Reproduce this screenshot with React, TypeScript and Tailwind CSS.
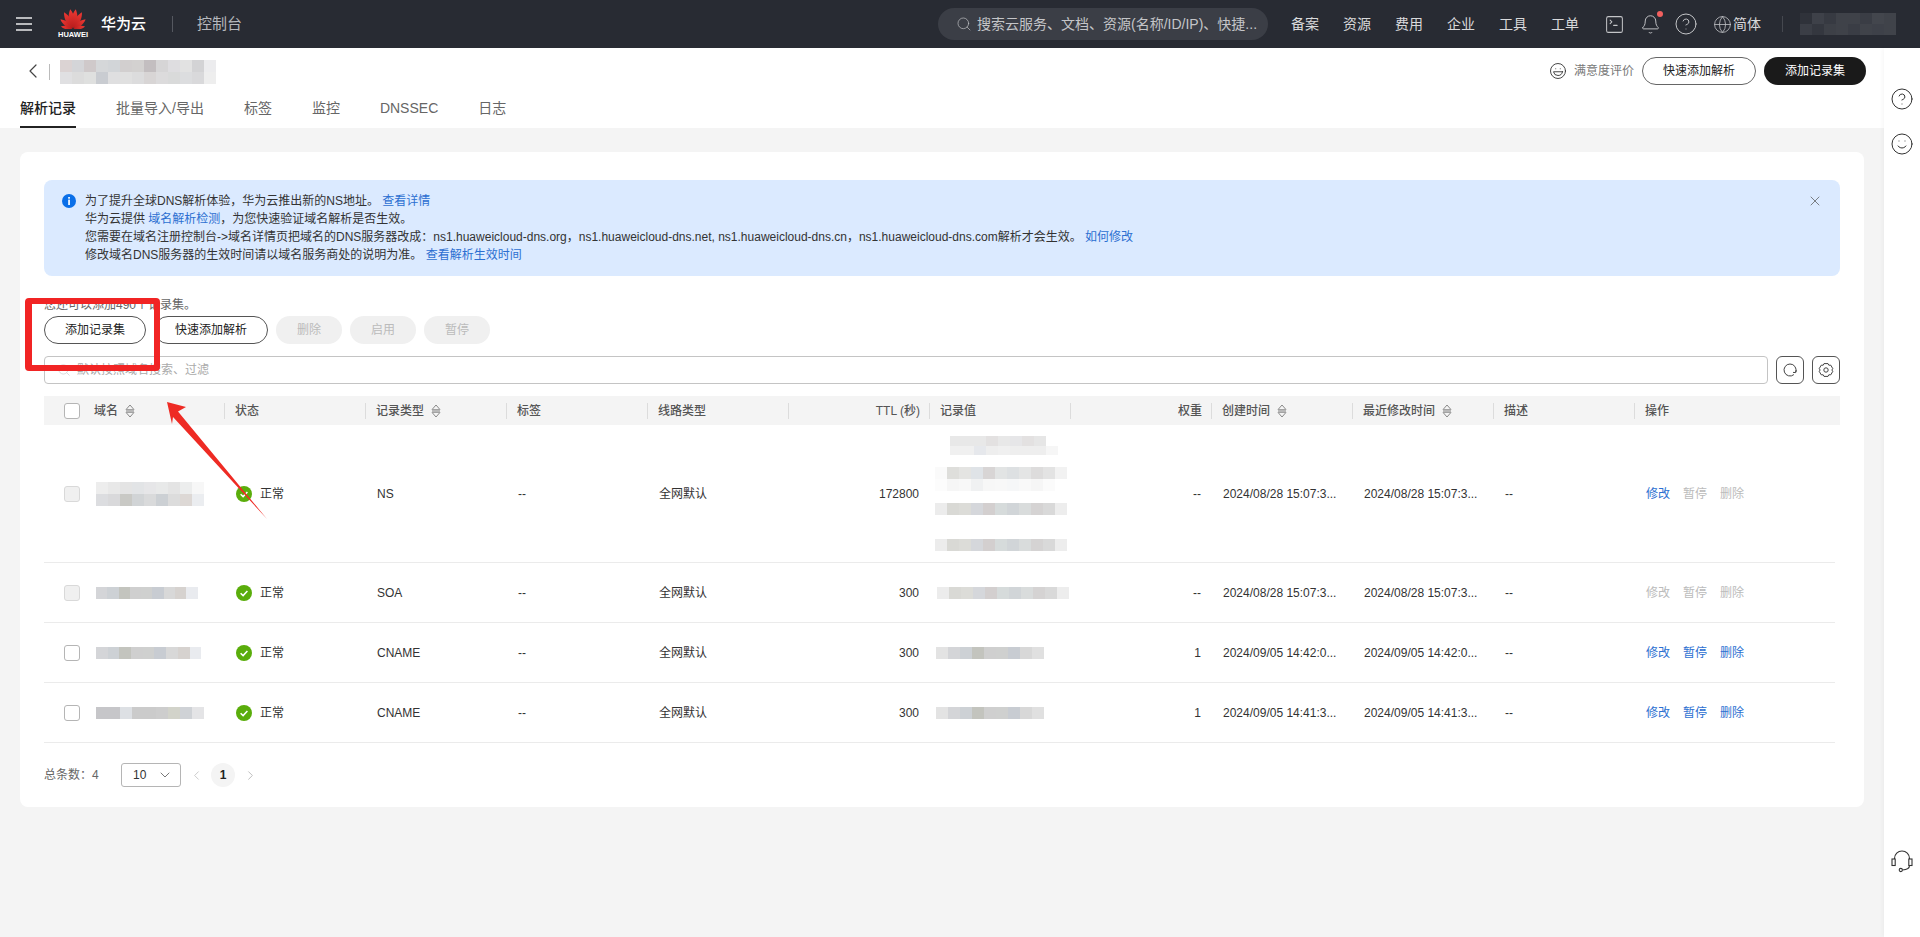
import React from "react";
import { Search, SquareTerminal, Bell, CircleHelp, Globe, Laugh, Smile, ChevronLeft, ChevronRight, ChevronDown, X } from "lucide-react";

function Mosaic({ rows, w = 12, h = 12, className = "" }: { rows: string[][]; w?: number; h?: number; className?: string }) {
  return (
    <div className={"flex flex-col " + className}>
      {rows.map((r, i) => (
        <div key={i} className="flex">
          {r.map((c, j) => (
            <div key={j} style={{ width: w, height: h, backgroundColor: c }} />
          ))}
        </div>
      ))}
    </div>
  );
}

const titleRows = [
  ["#dbd3d3", "#d4d5d8", "#cfc9ca", "#d5d7d9", "#d2d5d8", "#d2cfcf", "#d3d1d0", "#c3bec0", "#d6d5d6", "#dedde0", "#e2e2e2", "#d3d3d5", "#ececee"],
  ["#e0e0e2", "#dcdcdc", "#dfe0df", "#c9ccd1", "#dfdfe0", "#e0e0e0", "#dcdcdd", "#d8d5d5", "#dcdbdc", "#d9dada", "#dcdddf", "#d9d9db", "#eeeeee"],
];
const userRows = [
  ["#2f323a", "#3e4149", "#373a42", "#3f4249", "#3f4249", "#3a3d45", "#43464d", "#40434a"],
  ["#3b3e46", "#34373f", "#3d4047", "#3f4249", "#3a3d45", "#40434a", "#3e4149", "#40434a"],
];
const d1 = [
  ["#ededed", "#e8e8e8", "#e4e4e4", "#e2e4e6", "#e6e6e8", "#e8e9e9", "#e4e4e4", "#eceded", "#f7f7f7"],
  ["#dcdde0", "#d9d9db", "#c9c9c5", "#d1d4d6", "#d9dadb", "#ccd0d4", "#dcdcdc", "#ddd8d5", "#ebedf0"],
];
const d2 = [["#d4d5d8", "#cdd1d5", "#c3c4be", "#cfcfcf", "#cfd0cf", "#c8ccd2", "#d8d8d8", "#d6d2cf", "#e9ebef"]];
const d4 = [["#c6c6c9", "#c6c6c9", "#dde0e4", "#cbcbcb", "#cbcbcb", "#cdcdcd", "#d2d3ca", "#cfd2d6", "#e4e4e6"]];
const v2 = [["#ececec", "#d9d9d5", "#dcdcd8", "#d5d7db", "#d3cfcf", "#d6dbdb", "#d1d5d8", "#d9dcdc", "#d5d3d3", "#d9d9d9", "#ededed"]];
const v3 = [["#e3e3e3", "#d4d5d8", "#cdd1d5", "#c3c4be", "#cfcfcf", "#cfd0cf", "#c8ccd2", "#d8d8d8", "#e0e0e0"]];

function Sort() {
  return (
    <svg width="10" height="14" viewBox="0 0 10 14" fill="none" className="ml-[7px] shrink-0">
      <path d="M5 1 L9 5.6 H1 Z" stroke="#8a8a8a" strokeWidth="1" strokeLinejoin="round" />
      <path d="M5 13 L9 8.4 H1 Z" stroke="#8a8a8a" strokeWidth="1" strokeLinejoin="round" />
      <rect x="1" y="5.6" width="8" height="2.8" fill="#b8b8b8" />
    </svg>
  );
}

function Box({ disabled }: { disabled?: boolean }) {
  return <div className={"h-4 w-4 shrink-0 rounded-[3px] border " + (disabled ? "border-[#d9d9d9] bg-[#f0f0f0]" : "border-[#b5b5b5] bg-white")} />;
}

function Check() {
  return (
    <svg width="16" height="16" viewBox="0 0 16 16" className="shrink-0">
      <circle cx="8" cy="8" r="8" fill="#5aad0b" />
      <path d="M4.6 8.2 L7.1 10.6 L11.4 5.9" fill="none" stroke="#fff" strokeWidth="1.5" />
    </svg>
  );
}

const heads: [string, boolean, boolean][] = [
  ["状态", false, false],
  ["记录类型", true, false],
  ["标签", false, false],
  ["线路类型", false, false],
  ["TTL (秒)", false, true],
  ["记录值", false, false],
  ["权重", false, true],
  ["创建时间", true, false],
  ["最近修改时间", true, false],
  ["描述", false, false],
  ["操作", false, false],
];

const GRID = "grid grid-cols-[180px_141px_141px_141px_141px_141px_141px_141px_141px_141px_141px_206px]";
const RGRID = "grid grid-cols-[180px_141px_141px_141px_141px_141px_141px_141px_141px_141px_141px_201px]";

type Row = {
  h: string; boxOff: boolean; dom: React.ReactNode; type: string; ttl: string; val: React.ReactNode; wt: string;
  c: string; m: string; a: [boolean, boolean, boolean];
};

const rowsData: Row[] = [
  {
    h: "h-[138px]", boxOff: true, dom: <Mosaic rows={d1} className="ml-4" />, type: "NS", ttl: "172800", wt: "--",
    c: "2024/08/28 15:07:3...", m: "2024/08/28 15:07:3...", a: [true, false, false],
    val: (
      <div className="-ml-[3px] flex flex-col">
        <Mosaic w={12} h={9.5} rows={[
          ["#ffffff", "#e8e8e8", "#e8e8e8", "#e8e8e8", "#e3e1e1", "#e8e8e8", "#e6e6e8", "#e3e1e1", "#e6e6e6", "#ffffff"],
          ["#ffffff", "#f0f0f0", "#f0f0f0", "#e6e8ec", "#eeeeee", "#f0f0f0", "#eeeeee", "#eeeeee", "#eeeeee", "#f6f6f6"],
        ]} className="ml-[3px]" />
        <Mosaic w={12} h={12} rows={[
          ["#fafafa", "#dededb", "#e4e4e2", "#dfe3e7", "#d8d5d5", "#e2e4e4", "#dde0e2", "#e4e5e5", "#dddcdc", "#e3e3e3", "#f2f2f2"],
          ["#fcfcfc", "#f6f6f6", "#f8f8f8", "#f0f1f2", "#f7f7f7", "#f8f8f8", "#f6f7f8", "#f9f9f9", "#f6f6f6", "#fbfbfb", "#ffffff"],
        ]} className="mt-3" />
        <Mosaic rows={v2} className="mt-3" />
        <Mosaic rows={v2} className="mt-6" />
      </div>
    ),
  },
  {
    h: "h-[60px]", boxOff: true, dom: <Mosaic w={11.3} rows={d2} className="ml-4" />, type: "SOA", ttl: "300", wt: "--",
    c: "2024/08/28 15:07:3...", m: "2024/08/28 15:07:3...", a: [false, false, false],
    val: <Mosaic rows={v2} className="-ml-[1px]" />,
  },
  {
    h: "h-[60px]", boxOff: false, dom: <Mosaic w={11.7} rows={d2} className="ml-4" />, type: "CNAME", ttl: "300", wt: "1",
    c: "2024/09/05 14:42:0...", m: "2024/09/05 14:42:0...", a: [true, true, true],
    val: <Mosaic rows={v3} className="-ml-[2px]" />,
  },
  {
    h: "h-[60px]", boxOff: false, dom: <Mosaic rows={d4} className="ml-4" />, type: "CNAME", ttl: "300", wt: "1",
    c: "2024/09/05 14:41:3...", m: "2024/09/05 14:41:3...", a: [true, true, true],
    val: <Mosaic rows={v3} className="-ml-[2px]" />,
  },
];

function Logo() {
  const angles = [-78, -52, -28, -8, 8, 28, 52, 78];
  const lens = [0.62, 0.8, 0.95, 1, 1, 0.95, 0.8, 0.62];
  return (
    <div className="flex w-[26px] flex-col items-center">
      <svg width="26" height="20" viewBox="0 0 26 20">
        <defs>
          <linearGradient id="pet" x1="0" y1="1" x2="0" y2="0">
            <stop offset="0" stopColor="#b81c1c" />
            <stop offset="1" stopColor="#ee3a34" />
          </linearGradient>
        </defs>
        {angles.map((a, i) => (
          <g key={i} transform={`translate(13 20) rotate(${a}) scale(${lens[i]})`}>
            <path d="M0 -1 C -3.8 -7 -3.6 -14 0 -20 C 3.6 -14 3.8 -7 0 -1 Z" fill="url(#pet)" />
          </g>
        ))}
      </svg>
      <span className="mt-[1px] text-[7.5px] font-bold leading-[9px] text-white">HUAWEI</span>
    </div>
  );
}

function RefreshIcon() {
  return (
    <svg width="16" height="16" viewBox="0 0 16 16" fill="none" stroke="#444" strokeWidth="1">
      <path d="M11.9 12.6 A6 6 0 1 1 13.7 10" />
      <polyline points="11,10.4 13.7,10.6 14.4,8.2" />
    </svg>
  );
}

function GearIcon() {
  return (
    <svg width="16" height="16" viewBox="0 0 16 16" fill="none" stroke="#444" strokeWidth="1" strokeLinejoin="round">
      <path d="M6 1.6 H10 L10.8 3.2 L12.8 3.2 L14.8 6.7 L13.8 8 L14.8 9.3 L12.8 12.8 L10.8 12.8 L10 14.4 H6 L5.2 12.8 L3.2 12.8 L1.2 9.3 L2.2 8 L1.2 6.7 L3.2 3.2 L5.2 3.2 Z" />
      <circle cx="8" cy="8" r="2.2" />
    </svg>
  );
}

function HeadsetIcon() {
  return (
    <svg width="24" height="24" viewBox="0 0 24 24" fill="none" stroke="#333" strokeWidth="1.1">
      <path d="M4.5 10 V9.5 A7.5 7.5 0 0 1 19.5 9.5 V10" />
      <rect x="2" y="10" width="3.2" height="6.5" />
      <rect x="18.8" y="10" width="3.2" height="6.5" />
      <path d="M19.5 16.5 C19.5 19.5 16.5 20.8 12.5 21" />
      <circle cx="10.8" cy="21" r="1.6" />
    </svg>
  );
}

export default function App() {
  return (
    <div className="relative flex h-[937px] w-[1920px] flex-col overflow-hidden bg-[#f4f4f4] font-['Liberation_Sans','Noto_Sans_CJK_SC',sans-serif] text-xs text-[#333]">
      {/* top bar */}
      <header className="flex h-12 shrink-0 items-center bg-[#282b33] pl-4 text-[#d8d9db]">
        <div className="flex h-[14px] w-4 flex-col justify-between">
          <div className="h-[2px] bg-[#b9babd]" />
          <div className="h-[2px] bg-[#b9babd]" />
          <div className="h-[2px] bg-[#b9babd]" />
        </div>
        <div className="ml-7"><Logo /></div>
        <span className="ml-[15px] text-[15px] font-medium text-white">华为云</span>
        <div className="ml-[26px] h-4 w-px bg-[#555860]" />
        <span className="ml-6 text-[15px] text-[#b6b8bd]">控制台</span>
        <div className="ml-[696px] flex h-8 w-[330px] items-center rounded-2xl bg-[#3b3e46] pl-[18px] text-[#c4c5c8]">
          <Search size={16} strokeWidth={1} className="shrink-0" />
          <span className="ml-[5px] truncate text-sm">搜索云服务、文档、资源(名称/ID/IP)、快捷...</span>
        </div>
        <nav className="ml-[23px] flex gap-6 text-sm">
          <span>备案</span><span>资源</span><span>费用</span><span>企业</span><span>工具</span><span>工单</span>
        </nav>
        <SquareTerminal size={21} strokeWidth={1.15} className="ml-[25px] text-[#c4c5c8]" />
        <div className="relative ml-[15px]">
          <Bell size={21} strokeWidth={1.1} className="text-[#c4c5c8]" />
          <div className="absolute -right-[2px] -top-[3px] h-[6px] w-[6px] rounded-full bg-[#f2605f]" />
        </div>
        <CircleHelp size={24} strokeWidth={1} className="ml-[13px] text-[#c4c5c8]" />
        <Globe size={19} strokeWidth={1} className="ml-[15px] text-[#c4c5c8]" />
        <span className="ml-[1px] text-sm">简体</span>
        <div className="ml-[21px] h-4 w-px bg-[#45484f]" />
        <Mosaic rows={userRows} w={12} h={11} className="ml-[17px]" />
      </header>

      <div className="flex min-h-0 flex-1">
        <div className="flex w-[1884px] flex-col">
          {/* page head */}
          <section className="h-20 shrink-0 bg-white">
            <div className="flex h-[52px] items-start">
              <ChevronLeft size={24} strokeWidth={1.2} className="ml-[21px] mt-[11px] text-[#444]" />
              <div className="ml-[4px] mt-[16px] h-4 w-px bg-[#bbb]" />
              <Mosaic rows={titleRows} className="ml-[10px] mt-3" />
              <div className="ml-auto mr-[18px] mt-[9px] flex items-center">
                <Laugh size={18} strokeWidth={1.2} className="text-[#333]" />
                <span className="ml-[7px] text-xs text-[#777]">满意度评价</span>
                <button className="ml-2 h-7 w-[114px] rounded-full border border-[#666] bg-white text-xs text-[#222]">快速添加解析</button>
                <button className="ml-2 h-7 w-[102px] rounded-full bg-[#1a1a1a] text-xs text-white">添加记录集</button>
              </div>
            </div>
            <div className="ml-5 flex h-7 gap-10 text-sm text-[#666]">
              <div className="h-7 border-b-2 border-[#222] font-medium leading-4 text-[#222]">解析记录</div>
              <div className="leading-4">批量导入/导出</div>
              <div className="leading-4">标签</div>
              <div className="leading-4">监控</div>
              <div className="leading-4">DNSSEC</div>
              <div className="leading-4">日志</div>
            </div>
          </section>

          {/* card */}
          <section className="mx-5 mt-6 h-[655px] rounded-lg bg-white px-6 pt-7">
            <div className="relative flex h-24 rounded-lg bg-[#dbeaff] pl-[18px] pt-3">
              <svg width="14" height="14" viewBox="0 0 14 14" className="mt-[2px] shrink-0">
                <circle cx="7" cy="7" r="7" fill="#0a6fe8" />
                <rect x="6.2" y="5.6" width="1.7" height="5.4" fill="#fff" />
                <rect x="6.2" y="3" width="1.7" height="1.7" fill="#fff" />
              </svg>
              <div className="ml-[9px] text-xs leading-[18px] text-[#333]">
                <div>为了提升全球DNS解析体验，华为云推出新的NS地址。 <a className="text-[#2c6fd1]">查看详情</a></div>
                <div>华为云提供 <a className="text-[#2c6fd1]">域名解析检测</a>，为您快速验证域名解析是否生效。</div>
                <div>您需要在域名注册控制台-&gt;域名详情页把域名的DNS服务器改成：ns1.huaweicloud-dns.org，ns1.huaweicloud-dns.net, ns1.huaweicloud-dns.cn，ns1.huaweicloud-dns.com解析才会生效。 <a className="text-[#2c6fd1]">如何修改</a></div>
                <div>修改域名DNS服务器的生效时间请以域名服务商处的说明为准。 <a className="text-[#2c6fd1]">查看解析生效时间</a></div>
              </div>
              <X size={16} strokeWidth={1.1} className="absolute right-[17px] top-[13px] text-[#555]" />
            </div>

            <div className="mt-[21px] h-4 text-xs leading-4 text-[#666]">您还可以添加490个记录集。</div>

            <div className="mt-[3px] flex h-7 text-xs">
              <button className="w-[102px] rounded-full border border-[#555] bg-white text-[#222]">添加记录集</button>
              <button className="ml-2 w-[114px] rounded-full border border-[#555] bg-white text-[#222]">快速添加解析</button>
              <button className="ml-2 w-[66px] rounded-full bg-[#f0f0f0] text-[#bbb]">删除</button>
              <button className="ml-2 w-[66px] rounded-full bg-[#f0f0f0] text-[#bbb]">启用</button>
              <button className="ml-2 w-[66px] rounded-full bg-[#f0f0f0] text-[#bbb]">暂停</button>
            </div>

            <div className="mt-3 flex h-7 gap-2">
              <div className="flex w-[1724px] items-center rounded border border-[#c4c4c4] pl-3 text-[#aaa]">
                <Search size={14} strokeWidth={1.2} className="text-[#ccc]" />
                <span className="ml-[6px] text-xs">默认按照域名搜索、过滤</span>
              </div>
              <div className="flex w-7 items-center justify-center rounded-md border border-[#555]">
                <RefreshIcon />
              </div>
              <div className="flex w-7 items-center justify-center rounded-md border border-[#555]">
                <GearIcon />
              </div>
            </div>

            <div className={GRID + " mt-3 h-[29px] items-center bg-[#f4f4f4] text-xs font-medium text-[#555]"}>
              <div className="flex items-center pl-5">
                <Box />
                <span className="ml-[14px]">域名</span>
                <Sort />
              </div>
              {heads.map(([t, s, r]) => (
                <div key={t} className={"flex h-4 items-center border-l border-[#dcdcdc] pl-[10px] " + (r ? "justify-end pr-[9px]" : "")}>
                  <span>{t}</span>
                  {s && <Sort />}
                </div>
              ))}
            </div>

            {rowsData.map((r, i) => (
              <div key={i} className={RGRID + " w-[1791px] items-center border-b border-[#ebebeb] text-xs text-[#333] " + r.h}>
                <div className="flex items-center pl-5">
                  <Box disabled={r.boxOff} />
                  {r.dom}
                </div>
                <div className="flex items-center pl-3">
                  <Check />
                  <span className="ml-2">正常</span>
                </div>
                <div className="pl-3">{r.type}</div>
                <div className="pl-3">--</div>
                <div className="pl-3">全网默认</div>
                <div className="pr-[10px] text-right">{r.ttl}</div>
                <div className="pl-[9px]">{r.val}</div>
                <div className="pr-[10px] text-right">{r.wt}</div>
                <div className="pl-3">{r.c}</div>
                <div className="pl-3">{r.m}</div>
                <div className="pl-3">--</div>
                <div className="flex gap-[13px] pl-3">
                  <span className={r.a[0] ? "text-[#2c6fd1]" : "text-[#bbb]"}>修改</span>
                  <span className={r.a[1] ? "text-[#2c6fd1]" : "text-[#bbb]"}>暂停</span>
                  <span className={r.a[2] ? "text-[#2c6fd1]" : "text-[#bbb]"}>删除</span>
                </div>
              </div>
            ))}

            <div className="mt-5 flex h-6 items-center text-xs text-[#666]">
              <span className="w-[54px] whitespace-nowrap">总条数：4</span>
              <div className="ml-[23px] flex h-6 w-[60px] items-center rounded-[3px] border border-[#b5b5b5] pl-[11px] text-[#333]">
                <span>10</span>
                <ChevronDown size={16} strokeWidth={1.2} className="ml-[11px] text-[#555]" />
              </div>
              <ChevronLeft size={15} strokeWidth={1.2} className="ml-[8px] text-[#bbb]" />
              <div className="ml-[7px] flex h-6 w-6 items-center justify-center rounded-full bg-[#f4f4f4] font-bold text-[#222]">1</div>
              <ChevronRight size={15} strokeWidth={1.2} className="ml-[8px] text-[#aaa]" />
            </div>
          </section>
        </div>

        {/* right rail */}
        <aside className="flex w-9 flex-col items-center bg-white pt-[39px] shadow-[-2px_0_4px_rgba(0,0,0,0.03)]">
          <CircleHelp size={24} strokeWidth={1} className="text-[#333]" />
          <Smile size={24} strokeWidth={1} className="mt-[21px] text-[#333]" />
          <div className="mb-[64px] mt-auto"><HeadsetIcon /></div>
        </aside>
      </div>

      {/* annotation overlay */}
      <div className="absolute left-[25px] top-[298px] h-[73px] w-[135px] rounded-[4px] border-[6px] border-l-[7px] border-[#f12424]" />
      <svg className="absolute left-0 top-0" width="300" height="540" viewBox="0 0 300 540">
        <polygon points="167,402 186,407 178,411.5 267,519 173,417 172,424" fill="#ee2b24" />
      </svg>
    </div>
  );
}
